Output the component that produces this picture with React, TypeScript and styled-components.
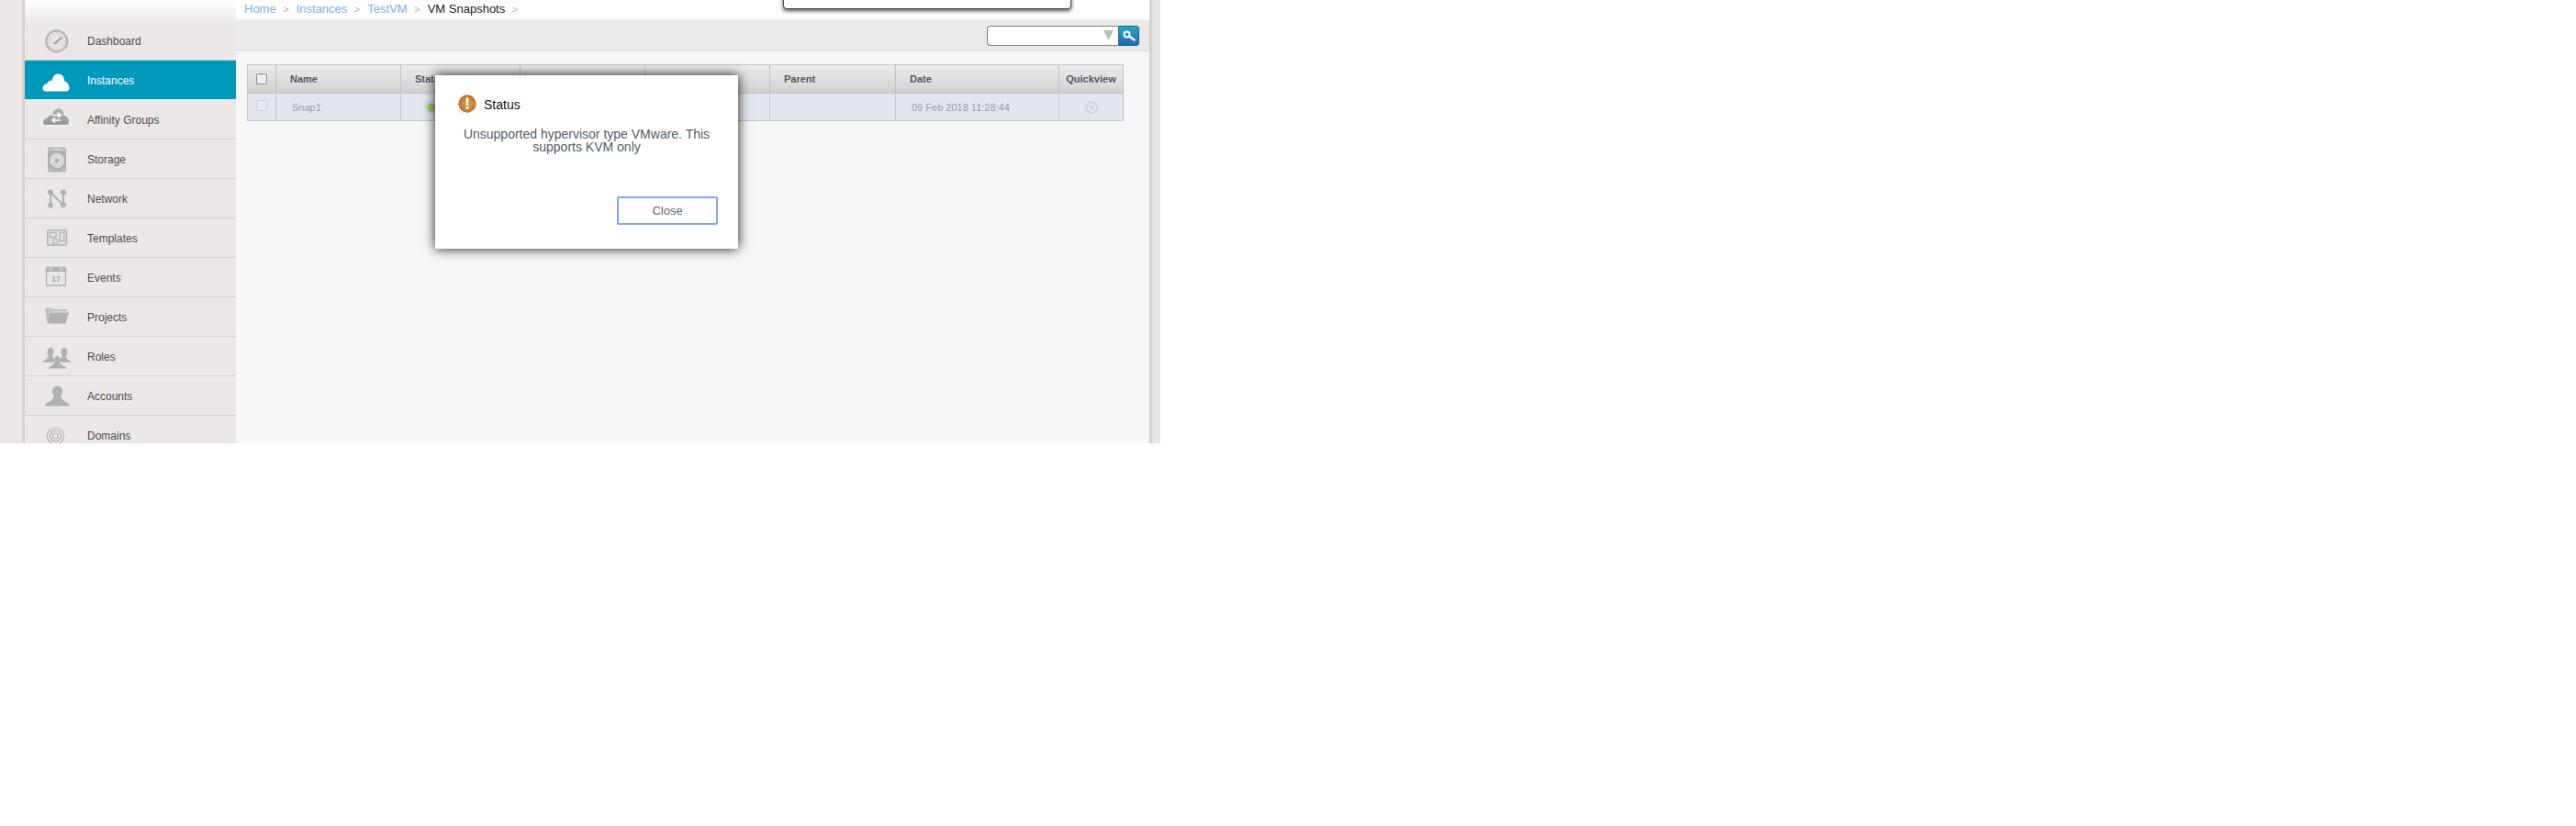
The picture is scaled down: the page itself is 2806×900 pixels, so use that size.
import React from 'react';
import styled, { createGlobalStyle } from 'styled-components';

const Global = createGlobalStyle`
  html, body { margin: 0; padding: 0; background: #fff; }
  * { box-sizing: border-box; }
  body { font-family: "Liberation Sans", Arial, sans-serif; }
`;

const Page = styled.div`
  position: relative;
  display: flex;
  width: 1264px;
  height: 483px;
  overflow: hidden;
  background: #ebe8e7;
`;

const LeftGutter = styled.div`
  flex: 0 0 27px;
  background: linear-gradient(90deg, #ebe8e7 23px, #cfcccb 27px);
`;

const RightGutter = styled.div`
  flex: 0 0 12px;
  background: linear-gradient(90deg, #cbc9c8 0, #ebe8e7 5px);
`;

const Sidebar = styled.nav`
  flex: 0 0 230px;
  padding-top: 23px;
  background: linear-gradient(#ffffff 0, #ebe8e7 26px) no-repeat #ebe8e7;
`;

const NavRow = styled.div<{ $active?: boolean }>`
  display: flex;
  align-items: center;
  height: 43px;
  padding-top: 1px;
  border-bottom: 1px solid ${(p) => (p.$active ? '#d8e4e8' : '#d3d0cf')};
  background: ${(p) => (p.$active ? '#0099bb' : 'transparent')};
  color: ${(p) => (p.$active ? '#ffffff' : '#524a4a')};
  font-size: 12px;
`;

const NavIcon = styled.span`
  display: flex;
  justify-content: center;
  flex: 0 0 68px;
  padding-left: 2px;
`;

const Main = styled.main`
  flex: 0 0 995px;
  background: #f7f7f7;
`;

const Breadcrumb = styled.div`
  display: flex;
  align-items: center;
  gap: 7.5px;
  height: 21px;
  padding: 0 0 2px 9px;
  background: #fff;
  font-size: 13px;
`;

const Crumb = styled.span<{ $current?: boolean }>`
  color: ${(p) => (p.$current ? '#1a1a1a' : '#7fabf2')};
`;

const Sep = styled.span`
  width: 7px;
  color: #b5b5b5;
  font-size: 11px;
`;

const Toolbar = styled.div`
  display: flex;
  justify-content: flex-end;
  align-items: center;
  height: 35px;
  padding-right: 11px;
  background: #eaeaea;
  border-top: 1px solid #f0f0f0;
  border-bottom: 1px solid #e0e0e0;
`;

const SearchBox = styled.div`
  display: flex;
  align-items: center;
  justify-content: flex-end;
  width: 143px;
  height: 22px;
  padding-right: 5px;
  background: #fff;
  border: 1px solid #8a8088;
  border-right: 0;
  border-radius: 4px 0 0 4px;
`;

const SearchButton = styled.div`
  display: flex;
  align-items: center;
  justify-content: center;
  width: 23px;
  height: 22px;
  background: linear-gradient(#2ca6c9, #1c6ea9);
  border: 1px solid #235f8c;
  border-radius: 0 3px 3px 0;
`;

const Table = styled.div`
  display: grid;
  grid-template-columns: 32px 136px 130px 136px 136px 137px 178px 70px;
  width: 955px;
  margin: 14px 0 0 12px;
  border-top: 1px solid #c8c6c6;
  border-bottom: 1px solid #c4c6ca;
`;

const HeadCell = styled.div<{ $center?: boolean; $first?: boolean }>`
  display: flex;
  align-items: center;
  justify-content: ${(p) => (p.$center ? 'center' : 'flex-start')};
  height: 31px;
  padding-left: ${(p) => (p.$center ? 0 : 15)}px;
  background: linear-gradient(#ececec, #d3d3d3);
  border-right: 1px solid #c4c2c2;
  border-bottom: 1px solid #c4c2c2;
  border-left: ${(p) => (p.$first ? '1px solid #c4c2c2' : '0')};
  color: #555257;
  font-size: 11px;
  font-weight: bold;
  text-shadow: 0 1px 0 rgba(255, 255, 255, 0.5);
`;

const BodyCell = styled.div<{ $center?: boolean; $first?: boolean }>`
  display: flex;
  align-items: center;
  justify-content: ${(p) => (p.$center ? 'center' : 'flex-start')};
  height: 29px;
  padding-left: ${(p) => (p.$center ? 0 : 17)}px;
  background: #e2e7f0;
  border-right: 1px solid #c4c6ca;
  border-left: ${(p) => (p.$first ? '1px solid #c4c6ca' : '0')};
  color: #9c9c9c;
  font-size: 11px;
`;

const Check = styled.span<{ $faded?: boolean }>`
  display: block;
  width: 12px;
  height: 12px;
  margin-bottom: ${(p) => (p.$faded ? 4 : 0)}px;
  background: ${(p) => (p.$faded ? '#e8ebf1' : '#eeeeee')};
  border: 1px solid ${(p) => (p.$faded ? '#cfcfd2' : '#8c8a8a')};
  border-radius: 2px;
`;

const StatusSvg = styled.svg`
  margin-left: 7px;
`;

const Dialog = styled.div`
  position: absolute;
  top: 82px;
  left: 474px;
  display: flex;
  flex-direction: column;
  width: 330px;
  height: 189px;
  padding: 20px 22px 26px 23px;
  background: #fff;
  box-shadow: 0 0 12px rgba(0, 0, 0, 0.9);
`;

const DialogTitle = styled.div`
  display: flex;
  align-items: center;
  gap: 8px;
  color: #111;
  font-size: 14px;
`;

const DialogMessage = styled.p`
  margin: 13px 0 0 -23px;
  width: 330px;
  padding: 0 28px;
  color: #545c68;
  font-size: 14px;
  line-height: 14px;
  text-align: center;
`;

const CloseButton = styled.button`
  align-self: flex-end;
  width: 110px;
  height: 31px;
  margin-top: auto;
  background: #fff;
  border: 2px solid #85a6ea;
  border-radius: 2px;
  color: #5f6870;
  font: 13px "Liberation Sans", Arial, sans-serif;
`;

const TopPopup = styled.div`
  position: absolute;
  top: -20px;
  left: 853px;
  width: 314px;
  height: 30px;
  background: #fff;
  border: 1px solid #4a4a4a;
  border-radius: 4px;
  box-shadow: 0 2px 4px rgba(0, 0, 0, 0.7);
`;

const Icon = ({ children }: { children: React.ReactNode }) => (
  <svg width="40" height="30" viewBox="0 0 40 30">{children}</svg>
);

const G = '#b3b1af';

const DashboardIcon = () => (
  <Icon>
    <circle cx="19.7" cy="15" r="11.5" fill="#e4e2e0" stroke={G} strokeWidth="2" />
    <circle cx="19.7" cy="15" r="8.5" fill="none" stroke="#c6c4c2" strokeWidth="1.5" strokeDasharray="1 3" />
    <path d="M17.5 17.5 L25 11" stroke="#9e9c9a" strokeWidth="1.8" strokeLinecap="round" />
  </Icon>
);

const CloudIcon = () => (
  <Icon>
    <path
      d="M8 26.5C5.5 26.5 4.5 24.8 4.5 23C4.5 20.5 6.5 18.5 9.5 18C10.5 15.5 12.5 14.5 14.5 14.8C15.5 10 18 7.5 21.5 7.5C25.5 7.5 28 10.5 28.2 15.5C31.5 16 33.5 19.5 33.5 23C33.5 25 32 26.5 30 26.5Z"
      fill="#fff"
    />
  </Icon>
);

const AffinityIcon = () => (
  <Icon>
    <defs>
      <linearGradient id="aff" x1="0" y1="0" x2="0" y2="1">
        <stop offset="0" stopColor="#b8b8b8" />
        <stop offset="1" stopColor="#939393" />
      </linearGradient>
    </defs>
    <path
      d="M8 20.5C5.5 20.5 4.5 19 4.5 17C4.5 14.5 6.5 12.5 9.5 12C10.5 9.5 12.5 8.5 14.5 8.8C15.5 4 18 1.5 21.5 1.5C25.5 1.5 28 4.5 28.2 9.5C31.5 10 33.5 13.5 33.5 17C33.5 19 32 20.5 30 20.5Z"
      fill="url(#aff)"
      stroke="#fff"
      strokeWidth="1"
    />
    <path d="M15 9.5H23.5M21 7L24 9.5L21 12M24 15H15.5M18 12.5L15 15L18 17.5" fill="none" stroke="#fff" strokeWidth="1.7" />
  </Icon>
);

const StorageIcon = () => (
  <Icon>
    <rect x="10" y="1.5" width="20" height="27" rx="2" fill={G} />
    <rect x="15" y="3" width="10" height="2" fill="#d8d6d4" />
    <circle cx="20" cy="16" r="8" fill="#dcdad8" />
    <circle cx="20" cy="16" r="2.2" fill={G} />
    <path d="M13.5 19.5A8 8 0 0 0 19 24" fill="none" stroke={G} />
    {[[12.5, 4.5], [27.5, 4.5], [12.5, 26], [27.5, 26]].map(([x, y]) => (
      <circle key={`${x}-${y}`} cx={x} cy={y} r="1.2" fill="#dcdad8" />
    ))}
  </Icon>
);

const NetworkIcon = () => (
  <Icon>
    <path d="M13 7.5V21.5L13 7.5L27 21.5V7.5" fill="none" stroke={G} strokeWidth="2" />
    <circle cx="13" cy="7.5" r="3" fill={G} />
    <circle cx="27" cy="7.5" r="3" fill={G} />
    <circle cx="13" cy="21.5" r="3" fill={G} />
    <circle cx="27" cy="21.5" r="3" fill={G} />
  </Icon>
);

const TemplatesIcon = () => (
  <Icon>
    <rect x="9.8" y="6" width="20.6" height="16" rx="1" fill="#e6e4e2" stroke={G} strokeWidth="1.6" />
    <rect x="12.5" y="8.5" width="6.5" height="5" fill="none" stroke={G} strokeWidth="1.2" />
    <rect x="23" y="8.5" width="5" height="9" fill="none" stroke={G} strokeWidth="1.2" />
    <rect x="15.5" y="16" width="5.5" height="3.8" fill="none" stroke={G} strokeWidth="1.2" />
  </Icon>
);

const EventsIcon = () => (
  <Icon>
    <rect x="8.5" y="3.5" width="21" height="19.5" rx="1" fill="#e9e7e5" stroke={G} strokeWidth="1.4" />
    <rect x="8" y="3" width="22" height="5" fill={G} />
    <rect x="12" y="1.5" width="3" height="5" rx="1.5" fill="#c4c2c0" stroke="#ebe8e7" strokeWidth="0.5" />
    <rect x="23" y="1.5" width="3" height="5" rx="1.5" fill="#c4c2c0" stroke="#ebe8e7" strokeWidth="0.5" />
    <text x="19" y="19" textAnchor="middle" fontSize="9" fontWeight="bold" fontFamily="Liberation Sans" fill="#a9a7a5">
      17
    </text>
  </Icon>
);

const ProjectsIcon = () => (
  <Icon>
    <path d="M7 4.5H14L16 6H31V8.5H13L10 21.5H9Z" fill="#c4c2c0" />
    <path d="M12.5 9.5H33L29.5 21.5H10Z" fill={G} />
  </Icon>
);

const RolesIcon = () => (
  <Icon>
    <g fill={G}>
      <ellipse cx="13" cy="9.5" rx="3.4" ry="4.5" />
      <path d="M3 20.5C6 18.5 10.5 18 11 12H15C15.5 16 17 18 19 19L14 21Z" />
      <ellipse cx="28" cy="9.5" rx="3.4" ry="4.5" />
      <path d="M37 20.5C34 18.5 29.5 18 29 12H26C25.5 16 23 18 21 19L27 21Z" />
      <ellipse cx="20.5" cy="17.5" rx="3.2" ry="3.6" />
      <path d="M11 27.5C11.5 24.5 17 24.5 18.5 19H22.5C24 24.5 29.5 24.5 30 27.5Z" />
    </g>
  </Icon>
);

const AccountsIcon = () => (
  <Icon>
    <g fill={G}>
      <ellipse cx="20.5" cy="9.5" rx="5.6" ry="6" />
      <path d="M7 25.5C7 21 16 21.5 17.2 13H23.8C25 21.5 34 21 34 25.5Z" />
    </g>
  </Icon>
);

const DomainsIcon = () => (
  <Icon>
    <g fill="none" stroke={G}>
      <circle cx="18.5" cy="15" r="9" strokeWidth="1.2" />
      <circle cx="18.5" cy="15" r="6" strokeWidth="1.2" />
      <circle cx="18.5" cy="15" r="3" strokeWidth="1.2" />
    </g>
  </Icon>
);

const navItems: { label: string; icon: React.ReactNode; active?: boolean }[] = [
  { label: 'Dashboard', icon: <DashboardIcon /> },
  { label: 'Instances', icon: <CloudIcon />, active: true },
  { label: 'Affinity Groups', icon: <AffinityIcon /> },
  { label: 'Storage', icon: <StorageIcon /> },
  { label: 'Network', icon: <NetworkIcon /> },
  { label: 'Templates', icon: <TemplatesIcon /> },
  { label: 'Events', icon: <EventsIcon /> },
  { label: 'Projects', icon: <ProjectsIcon /> },
  { label: 'Roles', icon: <RolesIcon /> },
  { label: 'Accounts', icon: <AccountsIcon /> },
  { label: 'Domains', icon: <DomainsIcon /> },
];

const StatusDot = () => (
  <StatusSvg width="18" height="18" viewBox="0 0 18 18">
    <circle cx="9" cy="9" r="8" fill="#d5dae2" />
    <circle cx="9" cy="9" r="4.5" fill="#a3cc62" />
  </StatusSvg>
);

const QuickviewDot = () => (
  <svg width="16" height="16" viewBox="0 0 16 16">
    <circle cx="8" cy="8" r="6" fill="none" stroke="#d2d5da" strokeWidth="2" />
    <circle cx="8" cy="8" r="2.5" fill="#d2d5da" />
  </svg>
);

const WarningIcon = () => (
  <svg width="22" height="24" viewBox="0 0 22 24">
    <defs>
      <radialGradient id="warn" cx="0.5" cy="0.5" r="0.55">
        <stop offset="0" stopColor="#e0a661" />
        <stop offset="1" stopColor="#b26f26" />
      </radialGradient>
    </defs>
    <path d="M1 14C1 20 6 23 10 22C5 21 2 18 1 14Z" fill="#d9d9d9" />
    <circle cx="12" cy="11" r="9.7" fill="url(#warn)" />
    <path d="M10.5 4.5H13.5L12.8 13H11.2Z" fill="#fff" />
    <circle cx="12" cy="15.6" r="1.6" fill="#fff" />
  </svg>
);

export default function App() {
  return (
    <Page>
      <Global />
      <LeftGutter />
      <Sidebar>
        {navItems.map((item) => (
          <NavRow key={item.label} $active={item.active}>
            <NavIcon>{item.icon}</NavIcon>
            {item.label}
          </NavRow>
        ))}
      </Sidebar>
      <Main>
        <Breadcrumb>
          <Crumb>Home</Crumb>
          <Sep>&gt;</Sep>
          <Crumb>Instances</Crumb>
          <Sep>&gt;</Sep>
          <Crumb>TestVM</Crumb>
          <Sep>&gt;</Sep>
          <Crumb $current>VM Snapshots</Crumb>
          <Sep>&gt;</Sep>
        </Breadcrumb>
        <Toolbar>
          <SearchBox>
            <svg width="11" height="11" viewBox="0 0 11 11">
              <path d="M0 0H11L5.5 11Z" fill="#bdbdbd" />
            </svg>
          </SearchBox>
          <SearchButton>
            <svg width="14" height="12" viewBox="0 0 14 12">
              <circle cx="4.5" cy="4.5" r="3" fill="none" stroke="#fff" strokeWidth="2" />
              <path d="M7 6.5L12.5 10.5" stroke="#fff" strokeWidth="2.4" strokeLinecap="round" />
            </svg>
          </SearchButton>
        </Toolbar>
        <Table>
          <HeadCell $center $first><Check /></HeadCell>
          <HeadCell>Name</HeadCell>
          <HeadCell>State</HeadCell>
          <HeadCell />
          <HeadCell />
          <HeadCell>Parent</HeadCell>
          <HeadCell>Date</HeadCell>
          <HeadCell $center>Quickview</HeadCell>

          <BodyCell $center $first><Check $faded /></BodyCell>
          <BodyCell>Snap1</BodyCell>
          <BodyCell><StatusDot /></BodyCell>
          <BodyCell />
          <BodyCell />
          <BodyCell />
          <BodyCell>09 Feb 2018 11:28:44</BodyCell>
          <BodyCell $center><QuickviewDot /></BodyCell>
        </Table>
      </Main>
      <RightGutter />
      <TopPopup />
      <Dialog>
        <DialogTitle>
          <WarningIcon />
          Status
        </DialogTitle>
        <DialogMessage>Unsupported hypervisor type VMware. This supports KVM only</DialogMessage>
        <CloseButton>Close</CloseButton>
      </Dialog>
    </Page>
  );
}
